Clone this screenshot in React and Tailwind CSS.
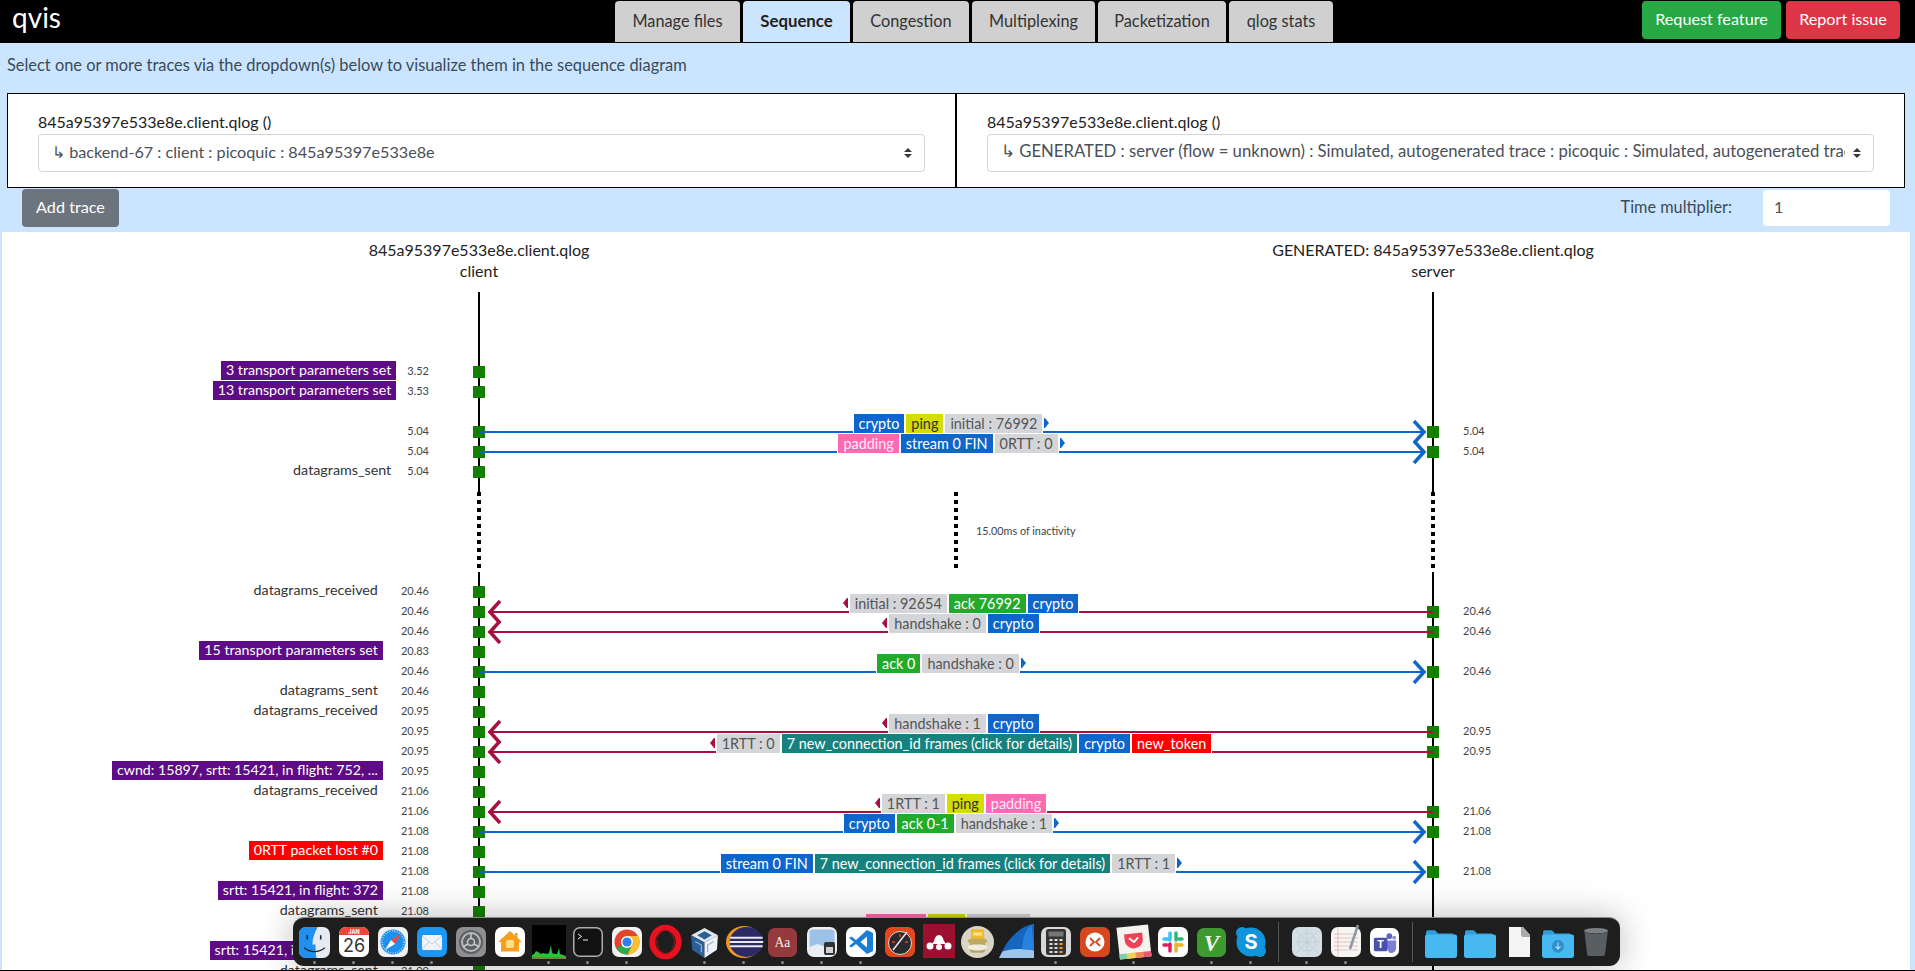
import { Fragment } from 'react'

const BLUE = 'bg-[#0c66cc]'
const RED = 'bg-[#a80f3e]'

const chipStyles = {
  blue: 'bg-[#0c66cc] text-white',
  yellow: 'bg-[#d4dc00] text-[#333]',
  gray: 'bg-[#d3d5d9] text-[#555]',
  pink: 'bg-[#ff69b4] text-[#ffe9f5]',
  green: 'bg-[#22ab2b] text-white',
  teal: 'bg-[#17827d] text-white',
  red: 'bg-[#ff0000] text-white',
}

const crypto = ['crypto', 'blue']
const ping = ['ping', 'yellow']
const padding = ['padding', 'pink']
const newConn = ['7 new_connection_id frames (click for details)', 'teal']
const stream = ['stream 0 FIN', 'blue']

const rowsTop = [
  { t: '3.52', tag: '3 transport parameters set', tagBg: 'bg-[#5e0b85]' },
  { t: '3.53', tag: '13 transport parameters set', tagBg: 'bg-[#5e0b85]' },
  {},
  { t: '5.04', s: '5.04', dir: 'right', chips: [crypto, ping, ['initial : 76992', 'gray']] },
  { t: '5.04', s: '5.04', dir: 'right', chips: [padding, stream, ['0RTT : 0', 'gray']] },
  { t: '5.04', label: 'datagrams_sent' },
]

const rowsBottom = [
  { t: '20.46', label: 'datagrams_received' },
  { t: '20.46', s: '20.46', dir: 'left', chips: [['initial : 92654', 'gray'], ['ack 76992', 'green'], crypto] },
  { t: '20.46', s: '20.46', dir: 'left', chips: [['handshake : 0', 'gray'], crypto] },
  { t: '20.83', tag: '15 transport parameters set', tagBg: 'bg-[#5e0b85]' },
  { t: '20.46', s: '20.46', dir: 'right', chips: [['ack 0', 'green'], ['handshake : 0', 'gray']] },
  { t: '20.46', label: 'datagrams_sent' },
  { t: '20.95', label: 'datagrams_received' },
  { t: '20.95', s: '20.95', dir: 'left', chips: [['handshake : 1', 'gray'], crypto] },
  { t: '20.95', s: '20.95', dir: 'left', chips: [['1RTT : 0', 'gray'], newConn, crypto, ['new_token', 'red']] },
  { t: '20.95', tag: 'cwnd: 15897, srtt: 15421, in flight: 752, ...', tagBg: 'bg-[#5e0b85]' },
  { t: '21.06', label: 'datagrams_received' },
  { t: '21.06', s: '21.06', dir: 'left', chips: [['1RTT : 1', 'gray'], ping, padding] },
  { t: '21.08', s: '21.08', dir: 'right', chips: [crypto, ['ack 0-1', 'green'], ['handshake : 1', 'gray']] },
  { t: '21.08', tag: '0RTT packet lost #0', tagBg: 'bg-[#ff0000]' },
  { t: '21.08', s: '21.08', dir: 'right', chips: [stream, newConn, ['1RTT : 1', 'gray']] },
  { t: '21.08', tag: 'srtt: 15421, in flight: 372', tagBg: 'bg-[#5e0b85]' },
  { t: '21.08', label: 'datagrams_sent' },
  { t: '21.09', s: '21.09', dir: 'right', chips: [padding, ping, ['1RTT : 2', 'gray']] },
  { t: '21.09', tag: 'srtt: 15421, in flight: 1122', tagBg: 'bg-[#5e0b85]' },
  { t: '21.09', label: 'datagrams_sent' },
]

const Lane = ({ square }) => (
  <div className="relative flex h-5 w-3 shrink-0 items-center justify-center">
    <div className="absolute inset-y-0 left-[5px] w-0.5 bg-black" />
    {square && <div className="relative size-3 bg-[#138000]" />}
  </div>
)

const Triangle = ({ dir, color }) => (
  <svg width="6" height="10" viewBox="0 0 6 10" className="mt-1 shrink-0" fill={color}>
    {dir === 'right' ? <polygon points="1,0 2,0 6,5 2,10 1,10" /> : <polygon points="5,0 4,0 0,5 4,10 5,10" />}
  </svg>
)

const Arrow = ({ dir, chips }) => {
  const color = dir === 'right' ? '#0c66cc' : '#a80f3e'
  return (
    <>
      <div className={`absolute top-[9px] h-0.5 ${dir === 'right' ? `left-0 right-2 ${BLUE}` : `left-[9px] right-0 ${RED}`}`} />
      <svg
        width="16"
        height="24"
        viewBox="0 0 16 24"
        fill="none"
        stroke={color}
        strokeWidth="3.5"
        className={`absolute -top-0.5 ${dir === 'right' ? 'right-1.5' : 'left-2'}`}
      >
        <polyline points={dir === 'right' ? '3,1 13,12 3,23' : '13,1 3,12 13,23'} />
      </svg>
      <div className={`relative -mt-2 flex items-start ${dir === 'right' ? 'pr-2.5' : 'pl-2.5'}`}>
        {dir === 'left' && <Triangle dir="left" color={color} />}
        <div className="flex gap-[2px] bg-white px-px">
          {chips.map(([text, style], i) => (
            <span key={i} className={`flex h-[19px] items-center whitespace-nowrap px-[5px] text-[14.4px] ${chipStyles[style]}`}>
              {text}
            </span>
          ))}
        </div>
        {dir === 'right' && <Triangle dir="right" color={color} />}
      </div>
    </>
  )
}

const Row = ({ row }) => {
  const { t, s, label, tag, tagBg, dir, chips } = row
  return (
    <div className="flex h-5">
      <div className="flex w-[427px] shrink-0 items-center justify-end">
        {label && <span className="-mt-[5px] whitespace-nowrap pr-[5px] text-[14.3px] text-[#333]">{label}</span>}
        {tag && (
          <span className={`-mt-[3px] flex h-[19px] items-center whitespace-nowrap px-[5px] pb-0.5 text-[14.2px] text-white ${tagBg}`}>
            {tag}
          </span>
        )}
        {t && <span className={`-mt-px text-[11px] text-[#444] ${t.length > 4 ? 'pl-[18px]' : 'pl-[11px]'}`}>{t}</span>}
      </div>
      <div className="w-11 shrink-0" />
      <Lane square={!!t} />
      <div className="relative z-10 -mx-1.5 flex w-[954px] shrink-0 justify-center">{dir && <Arrow dir={dir} chips={chips} />}</div>
      <Lane square={!!s} />
      {s && <span className="-mt-px pl-6 text-[11px] leading-5 text-[#444]">{s}</span>}
    </div>
  )
}

const dots = 'bg-[repeating-linear-gradient(to_bottom,#000_0,#000_4px,transparent_4px,transparent_8px)]'

const GapLane = () => (
  <div className="flex h-[100px] w-3 shrink-0 flex-col items-center">
    <div className="h-2.5 w-0.5 bg-black" />
    <div className={`h-[78px] w-1 ${dots}`} />
    <div className="mt-0.5 h-2.5 w-0.5 bg-black" />
  </div>
)

const Inactivity = () => (
  <div className="flex h-[100px]">
    <div className="w-[471px] shrink-0" />
    <GapLane />
    <div className="w-[942px] shrink-0 pl-[469px] pt-2.5">
      <div className="flex h-[78px] items-center gap-[18px]">
        <div className={`h-[78px] w-1 ${dots}`} />
        <span className="text-[10.8px] text-[#444]">15.00ms of inactivity</span>
      </div>
    </div>
    <GapLane />
  </div>
)

const Tab = ({ children, active, className }) => (
  <div
    className={`flex h-[41px] items-center justify-center rounded-t-[4px] pb-px ${
      active ? 'bg-[#cce5ff] text-[16.8px] font-bold text-[#222]' : 'bg-[#d0d0d0] text-[16.3px] text-[#333]'
    } ${className}`}
  >
    {children}
  </div>
)

const Field = ({ title, value, wide }) => (
  <div className="h-[95px] w-[949px] shrink-0 border border-black bg-white px-[30px] pt-4">
    <div className="text-base leading-6 text-[#222]">{title}</div>
    <div className="relative">
      <select
        defaultValue={value}
        className={`h-[38px] w-full appearance-none rounded-[4px] border border-[#ced4da] bg-white pb-0.5 pl-[13px] pr-7 text-[#495057] outline-none ${
          wide ? 'text-[16.7px]' : 'text-[16.2px]'
        }`}
      >
        <option value={value}>{value}</option>
      </select>
      <svg width="8" height="10" viewBox="0 0 4 5" className="absolute right-[13px] top-[14px]" fill="#343a40">
        <path d="M2 0L0 2h4zm0 5L0 3h4z" />
      </svg>
    </div>
  </div>
)

/* dock icons, all drawn in a 30x30 box */
const Tile = ({ fill = '#fff' }) => <rect x="0" y="0" width="30" height="30" rx="7" fill={fill} />

const icons = {
  finder: (
    <>
      <rect width="30" height="30" rx="7" fill="#e6ebf3" />
      <path d="M7 0h11c-3 6-5 11-5 17h3c0 4 0 9 1 13H7a7 7 0 0 1-7-7V7a7 7 0 0 1 7-7z" fill="#1f8ff0" />
      <path d="M8 8v4M21 8v4" stroke="#222" strokeWidth="1.5" />
      <path d="M5 20c6 5 14 5 20 0" stroke="#222" strokeWidth="1.2" fill="none" />
    </>
  ),
  calendar: (
    <>
      <Tile />
      <path d="M7 0h16a7 7 0 0 1 7 7v1H0V7a7 7 0 0 1 7-7z" fill="#f0453a" />
      <text x="15" y="6.5" fontSize="5.5" fontWeight="700" fill="#fff" textAnchor="middle">JAN</text>
      <text x="15" y="25" fontSize="18" fill="#333" textAnchor="middle">26</text>
    </>
  ),
  safari: (
    <>
      <Tile fill="#eef0f3" />
      <circle cx="15" cy="15" r="12.5" fill="#1e90ee" />
      <circle cx="15" cy="15" r="11" fill="none" stroke="#cfe8ff" strokeWidth="1.5" strokeDasharray="0.8 1.6" />
      <polygon points="23,7 13,13 17,17" fill="#f24b3d" />
      <polygon points="7,23 13,13 17,17" fill="#fff" />
    </>
  ),
  mail: (
    <>
      <Tile fill="#1d97f5" />
      <rect x="5" y="8" width="20" height="15" rx="1.5" fill="#eef3f9" />
      <path d="M5 9l10 8 10-8M5 22l7-7M25 22l-7-7" fill="none" stroke="#b7c6d8" strokeWidth="0.8" />
    </>
  ),
  settings: (
    <>
      <Tile fill="#8d8f92" />
      <circle cx="15" cy="15" r="12" fill="#5d5f62" />
      <circle cx="15" cy="15" r="9" fill="none" stroke="#b8babc" strokeWidth="2" />
      <circle cx="15" cy="15" r="3.5" fill="none" stroke="#c8cacc" strokeWidth="1.5" />
      <path d="M15 6v5.5M7.5 19.5l4.5-2.5M22.5 19.5l-4.5-2.5" stroke="#c8cacc" strokeWidth="1.5" />
    </>
  ),
  home: (
    <>
      <Tile />
      <path d="M15 4l5 4.5V6h2.5v4.7L27 15h-3v9.5H6V15H3z" fill="#f59f1e" />
      <rect x="11" y="13" width="8" height="8" rx="2" fill="#ffe08a" />
    </>
  ),
  terminal: (
    <>
      <rect x="0.75" y="0.75" width="28.5" height="28.5" rx="6" fill="#111" stroke="#a9adb0" strokeWidth="1.5" />
      <path d="M5 7l3.5 2.5L5 12" fill="none" stroke="#eee" strokeWidth="1" />
      <path d="M10 13h5" stroke="#eee" strokeWidth="1" />
    </>
  ),
  chrome: (
    <>
      <Tile fill="#f2f2f2" />
      <circle cx="15" cy="15" r="12.5" fill="#e2442f" />
      <path d="M15 15L4.2 21.3A12.5 12.5 0 0 0 15 27.5h0.8L21.5 15z" fill="#2da94f" />
      <path d="M15 9h11.3A12.5 12.5 0 0 1 15.8 27.5L21.5 15z" fill="#fbc02d" />
      <circle cx="15" cy="15" r="6" fill="#fff" />
      <circle cx="15" cy="15" r="4.6" fill="#2f7ff0" />
    </>
  ),
  opera: (
    <>
      <ellipse cx="15" cy="15" rx="12" ry="13.5" fill="none" stroke="#e5131f" strokeWidth="5.5" />
      <ellipse cx="15" cy="15" rx="8" ry="11" fill="none" stroke="#a90d18" strokeWidth="1" />
    </>
  ),
  vbox: (
    <>
      <polygon points="15,1 28,8 15,15 2,8" fill="#dfe6ee" />
      <polygon points="2,8 15,15 15,30 3,22" fill="#2c5f96" />
      <polygon points="28,8 15,15 15,30 27,22" fill="#edf2f7" />
      <path d="M8 8l7-4 7 4-7 4z" fill="#2c5f96" />
      <path d="M6 14l6 3.500v7M24 14l-6 3.500v7" fill="none" stroke="#8fb3d6" strokeWidth="1.2" />
    </>
  ),
  eclipse: (
    <>
      <circle cx="15" cy="15" r="15" fill="#f0961e" />
      <circle cx="17" cy="15" r="14" fill="#2c2a63" />
      <path d="M3.500 11h27M3 15h28M3.500 19h27" stroke="#e9e8f4" strokeWidth="2" />
    </>
  ),
  dict: (
    <>
      <Tile fill="#94393c" />
      <text x="15" y="20" fontSize="14" fill="#eee" textAnchor="middle" fontFamily="'Liberation Serif',serif">Aa</text>
    </>
  ),
  preview: (
    <>
      <Tile fill="#eef0f2" />
      <rect x="2.500" y="2.500" width="25" height="25" rx="3" fill="#9cc2ea" />
      <path d="M2.500 20l8-3 8 3 9-2v7a3 3 0 0 1-3 3h-19a3 3 0 0 1-3-3z" fill="#e9edf1" />
      <rect x="17" y="15" width="11" height="13" rx="2" fill="#2f3133" />
      <rect x="19" y="20" width="7" height="6" fill="#cfd3d7" />
    </>
  ),
  vscode: (
    <>
      <Tile />
      <path d="M21 3l6 3v18l-6 3L10 17l-4.500 3.500L3 19l5-4-5-4 2.500-1.500L10 13zM21 9.500L14.500 15l6.500 5.500z" fill="#1a7ed4" />
    </>
  ),
  instruments: (
    <>
      <Tile fill="#e8451f" />
      <circle cx="15" cy="16" r="11.500" fill="#2a2a2c" stroke="#dcdcdc" strokeWidth="1" />
      <path d="M8 23L22 5" stroke="#e9e9e9" strokeWidth="1.5" />
      <path d="M15 7v3M7 15h3M23 15h-3" stroke="#e8451f" strokeWidth="1.5" />
    </>
  ),
  mendeley: (
    <>
      <rect x="-1" y="-3" width="32" height="34" fill="#9c0f2e" />
      <circle cx="6" cy="19" r="3.500" fill="#fff" />
      <circle cx="24" cy="19" r="3.500" fill="#fff" />
      <circle cx="15" cy="20" r="3" fill="#fff" />
      <path d="M15 8c-3 0-4 3-5 6l-2 3h14l-2-3c-1-3-2-6-5-6z" fill="#fff" />
    </>
  ),
  sequel: (
    <>
      <circle cx="15" cy="15" r="15" fill="#d9d4c4" />
      <rect x="8" y="14" width="14" height="11" rx="3" fill="#b5a46a" />
      <ellipse cx="15" cy="20" rx="9" ry="3" fill="#f0ecdf" />
      <ellipse cx="15" cy="14" rx="9" ry="3" fill="#bda95f" />
      <rect x="9" y="3" width="12" height="9" rx="1" fill="#f3b72f" />
      <rect x="11" y="6" width="8" height="3" fill="#fbe28d" />
    </>
  ),
  wireshark: (
    <>
      <path d="M30 -2C18 0 7 12 0 30h30z" fill="#1566c0" />
      <path d="M3 24c8-3 18-3 27-1v7H0z" fill="#9ec4ea" />
      <path d="M28 -1C22 4 20 12 20 22h10z" fill="#2a82df" />
    </>
  ),
  calc: (
    <>
      <Tile fill="#d8d8d8" />
      <rect x="5" y="2" width="20" height="26" rx="2.500" fill="#333" />
      <rect x="7.500" y="4.500" width="15" height="5" fill="#777" />
      <path d="M8.500 13h3M13.500 13h3M18.500 13h3M8.500 17h3M13.500 17h3M8.500 21h3M13.500 21h3M8.500 25h3M13.500 25h3" stroke="#ddd" strokeWidth="2" />
      <path d="M18.500 17h3M18.500 21h3M18.500 25h3" stroke="#f39c2b" strokeWidth="2" />
    </>
  ),
  remote: (
    <>
      <Tile fill="#d7481f" />
      <circle cx="15" cy="15" r="9.500" fill="#fff" />
      <path d="M10 11l4 4-4 4M20 11l-4 4 4 4" fill="none" stroke="#d7481f" strokeWidth="1.800" />
    </>
  ),
  pocket: (
    <g transform="rotate(-6 15 15)">
      <rect x="1" y="0" width="28" height="30" fill="#f5f3ee" />
      <rect x="1" y="25" width="7" height="5" fill="#7fd0a8" />
      <rect x="8" y="25" width="7" height="5" fill="#f2d250" />
      <rect x="15" y="25" width="7" height="5" fill="#ef8a5c" />
      <rect x="22" y="25" width="7" height="5" fill="#e8566f" />
      <path d="M7 7h16v6a8 8 0 0 1-16 0z" fill="#ef4056" />
      <path d="M11 11l4 4 4-4" fill="none" stroke="#fff" strokeWidth="1.800" />
    </g>
  ),
  slack: (
    <>
      <Tile />
      <path d="M12 6v7M6 12h6" stroke="#36c5f0" strokeWidth="3.500" strokeLinecap="round" />
      <path d="M18 6v7M18 12h0M24 12h-3" stroke="#2eb67d" strokeWidth="3.500" strokeLinecap="round" />
      <path d="M18 24v-7M24 18h-6" stroke="#ecb22e" strokeWidth="3.500" strokeLinecap="round" />
      <path d="M12 24v-7M6 18h3" stroke="#e01e5a" strokeWidth="3.500" strokeLinecap="round" />
    </>
  ),
  vim: (
    <>
      <Tile fill="#3d9a2f" />
      <text x="15" y="24" fontSize="24" fontStyle="italic" fontWeight="700" fill="#f2f7ee" textAnchor="middle" fontFamily="'Liberation Serif',serif">V</text>
    </>
  ),
  skype: (
    <>
      <circle cx="15" cy="15" r="14.500" fill="#0f95db" />
      <circle cx="6" cy="6" r="6" fill="#0f95db" />
      <circle cx="24" cy="24" r="6" fill="#0f95db" />
      <text x="15" y="22" fontSize="20" fontWeight="700" fill="#fff" textAnchor="middle">S</text>
    </>
  ),
  launch: (
    <>
      <Tile fill="#d3dde4" />
      <path d="M4 4l22 22M26 4L4 26M15 2v26M2 15h26" stroke="#bfcbd4" strokeWidth="0.800" />
      <circle cx="15" cy="15" r="9" fill="none" stroke="#bfcbd4" strokeWidth="0.800" />
    </>
  ),
  textedit: (
    <>
      <Tile fill="#f5f5f2" />
      <path d="M3 7h24M3 11h24M3 15h24M3 19h24M3 23h24" stroke="#e3b4b4" strokeWidth="0.800" />
      <path d="M7 0v30" stroke="#e79a9a" strokeWidth="0.600" />
      <path d="M27 -2L19 22" stroke="#8d98a5" strokeWidth="2.500" />
    </>
  ),
  teams: (
    <>
      <Tile />
      <circle cx="20" cy="8.500" r="3" fill="#5f63c4" />
      <circle cx="25" cy="10" r="2" fill="#8c90dc" />
      <path d="M13 13h14v8a5 5 0 0 1-7 4.500z" fill="#7b80d4" />
      <rect x="4" y="10" width="14" height="14" rx="1.500" fill="#4b4fb0" />
      <text x="11" y="21" fontSize="11" fontWeight="700" fill="#fff" textAnchor="middle">T</text>
    </>
  ),
  folder: (
    <>
      <path d="M2 6a2 2 0 0 1 2-2h7l3 3h14a2 2 0 0 1 2 2v5H2z" fill="#2f9fdc" />
      <rect x="1" y="8" width="32" height="22" rx="2" fill="#48b8f0" />
    </>
  ),
  doc: (
    <>
      <path d="M5 0h14l7 8v22H5z" fill="#f5f5f5" />
      <path d="M17 0h2l7 8v2h-7a2 2 0 0 1-2-2z" fill="#a9a9a9" />
    </>
  ),
  downloads: (
    <>
      <path d="M2 6a2 2 0 0 1 2-2h7l3 3h14a2 2 0 0 1 2 2v5H2z" fill="#2f9fdc" />
      <rect x="1" y="8" width="32" height="22" rx="2" fill="#48b8f0" />
      <circle cx="17" cy="19" r="6" fill="#2f8fcc" />
      <path d="M17 15.500v6M14.500 19l2.500 2.500 2.500-2.500" fill="none" stroke="#bfe6fb" strokeWidth="1" />
    </>
  ),
  trash: (
    <>
      <ellipse cx="14" cy="3" rx="13" ry="3" fill="#7b8083" />
      <path d="M1.500 4l3 25a3 3 0 0 0 3 1h13a3 3 0 0 0 3-1l3-25c-7 3-18 3-25 0z" fill="#595e62" />
    </>
  ),
}

const ActivityChart = () => (
  <svg width="34" height="34" viewBox="0 0 34 34" className="shrink-0">
    <rect width="34" height="34" fill="#000" />
    <path d="M0 34v-4l2-1 2-3 2 1 3 2 2-1 4 1 2-1 2-8 1 8 3 1 2 0 2-6 1 6 3 1 3 1v4z" fill="#29c23a" />
    <path d="M0 33h34" stroke="#c9482b" strokeWidth="1" />
  </svg>
)

const dock = [
  ['finder', 31, 1], ['calendar', 30, 1], ['safari', 30, 1], ['mail', 30, 1], ['settings', 30, 0], ['home', 30, 0],
  ['activity', 34, 1], ['terminal', 30, 1], ['chrome', 30, 1], ['opera', 33, 0], ['vbox', 31, 1], ['eclipse', 36, 1],
  ['dict', 29, 1], ['preview', 30, 1], ['vscode', 30, 1], ['instruments', 30, 0], ['mendeley', 30, 0], ['sequel', 33, 0],
  ['wireshark', 35, 0], ['calc', 30, 1], ['remote', 30, 0], ['pocket', 34, 1], ['slack', 30, 0], ['vim', 29, 1],
  ['skype', 30, 1], '|', ['launch', 30, 1], ['textedit', 30, 1], ['teams', 29, 0], '|', ['folder', 34, 0],
  ['folder', 34, 0], ['doc', 30, 0], ['downloads', 34, 0], ['trash', 28, 0],
]

const Dock = () => (
  <div className="absolute left-[293px] top-[917px] z-20 flex h-[49px] w-[1327px] items-center rounded-[11px] border-t border-[#8a8a8a] bg-[#1e1e1e] pl-[2px] font-['Inter',sans-serif] shadow-[0_0_34px_rgba(0,0,0,0.28)]">
    {dock.map((item, i) => {
      if (item === '|') {
        return (
          <div key={i} className="flex h-full w-[17px] shrink-0 items-center justify-center">
            <div className="h-[40px] w-px bg-[#555]" />
          </div>
        )
      }
      const [name, size, running] = item
      const box = name === 'folder' || name === 'downloads' ? 34 : 30
      return (
        <div key={i} className="relative flex h-full w-[39px] shrink-0 items-center justify-center">
          {name === 'activity' ? (
            <ActivityChart />
          ) : (
            <svg width={size} height={Math.min(size, 32)} viewBox={`0 0 ${box} 30`} preserveAspectRatio="none" className="shrink-0 overflow-visible">
              {icons[name]}
            </svg>
          )}
          {running === 1 && <div className="absolute bottom-[2px] size-[3px] rounded-full bg-[#8a8a8a]" />}
        </div>
      )
    })}
  </div>
)

export default function App() {
  return (
    <div className="relative h-[971px] w-[1915px] overflow-hidden bg-[#cce5ff] font-['Lato',sans-serif]">
      <header className="flex h-[43px] bg-black">
        <div className="w-[615px] shrink-0 pl-3 text-[28px] leading-[34px] text-white">qvis</div>
        <nav className="flex gap-[3px] pt-px">
          <Tab className="w-[125px]">Manage files</Tab>
          <Tab active className="w-[107px]">Sequence</Tab>
          <Tab className="w-[116px]">Congestion</Tab>
          <Tab className="w-[123px]">Multiplexing</Tab>
          <Tab className="w-[128px]">Packetization</Tab>
          <Tab className="w-[104px]">qlog stats</Tab>
        </nav>
        <div className="ml-auto flex gap-[5px] pr-[15px] pt-px">
          <button className="h-[38px] w-[139px] rounded-[4px] bg-[#28a745] pb-0.5 text-[16.2px] text-white">Request feature</button>
          <button className="h-[38px] w-[114px] rounded-[4px] bg-[#dc3545] pb-0.5 text-[16.2px] text-white">Report issue</button>
        </div>
      </header>

      <p className="h-[50px] pl-[7px] pt-[11px] text-[16.4px] leading-[22px] text-[#3a4a5a]">
        Select one or more traces via the dropdown(s) below to visualize them in the sequence diagram
      </p>

      <div className="flex pl-[7px]">
        <Field title="845a95397e533e8e.client.qlog ()" value="↳ backend-67 : client : picoquic : 845a95397e533e8e" />
        <Field
          wide
          title="845a95397e533e8e.client.qlog ()"
          value="↳ GENERATED : server (flow = unknown) : Simulated, autogenerated trace : picoquic : Simulated, autogenerated trace"
        />
      </div>

      <div className="flex h-[44px] items-start pl-[22px] pr-[25px]">
        <button className="mt-px h-[38px] w-[97px] rounded-[4px] bg-[#6c757d] pb-0.5 text-[16.2px] text-white">Add trace</button>
        <label className="ml-auto pt-[8px] text-[16.3px] leading-[22px] text-[#3a4a5a]">Time multiplier:</label>
        <input
          defaultValue="1"
          className="ml-[31px] mt-0.5 h-9 w-[127px] rounded-[4px] bg-white px-[11px] pb-1 text-base text-[#495057] outline-none"
        />
      </div>

      <main className="ml-0.5 h-[738px] w-[1908px] overflow-hidden bg-white text-[#222]">
        <div className="flex h-[60px] pt-[7px] text-center text-base leading-[21px]">
          <div className="w-[954px]">
            <div>845a95397e533e8e.client.qlog</div>
            <div>client</div>
          </div>
          <div className="w-[954px]">
            <div>GENERATED: 845a95397e533e8e.client.qlog</div>
            <div>server</div>
          </div>
        </div>
        <div>
          <div className="flex h-[70px]">
            <div className="w-[471px] shrink-0" />
            <div className="flex w-3 shrink-0 justify-center"><div className="h-[70px] w-0.5 bg-black" /></div>
            <div className="w-[942px] shrink-0" />
            <div className="flex w-3 shrink-0 justify-center"><div className="h-[70px] w-0.5 bg-black" /></div>
          </div>
          {rowsTop.map((row, i) => (
            <Row key={i} row={row} />
          ))}
          <Inactivity />
          {rowsBottom.map((row, i) => (
            <Fragment key={i}>
              <Row row={row} />
            </Fragment>
          ))}
        </div>
      </main>
      <div className="h-px bg-black" />

      <Dock />
    </div>
  )
}
